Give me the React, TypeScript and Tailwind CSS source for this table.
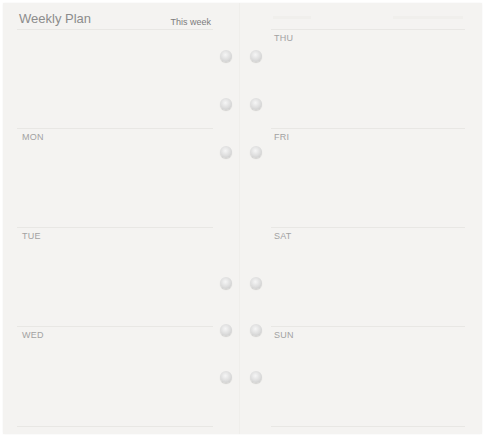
import React from "react";

const font = "font-['Liberation_Sans',Arial,sans-serif]";

function Hole() {
  return (
    <div className="w-[12px] h-[12px] rounded-full bg-[radial-gradient(circle_at_45%_40%,#f6f6f6_0%,#dcdcdc_55%,#c0c0c0_100%)] shadow-[0_1px_1px_rgba(0,0,0,0.14)]" />
  );
}

function Holes() {
  return (
    <div className="flex flex-col w-[12px] pt-[47px]">
      <div className="flex flex-col gap-[36px]">
        <Hole />
        <Hole />
        <Hole />
      </div>
      <div className="flex flex-col gap-[35px] mt-[119px]">
        <Hole />
        <Hole />
        <Hole />
      </div>
    </div>
  );
}

function Day({ label, last, right }: { label: string; last?: boolean; right?: boolean }) {
  return (
    <div
      className={
        "border-t border-[#e8e7e4] pt-[4px] " +
        (right ? "pl-[3px] " : "pl-[5px] ") +
        (last ? "h-[101px] border-b" : "h-[99px]")
      }
    >
      <div className="text-[9px] leading-none text-[#a2a2a2] tracking-[0.2px]">{label}</div>
    </div>
  );
}

export default function App() {
  return (
    <div className={"w-[485px] h-[439px] bg-white pt-[3px] pl-[3px] " + font}>
      <div className="flex h-[431px] w-[479px] shadow-[0_0_2px_rgba(0,0,0,0.05)]">
        {/* left page */}
        <div className="flex w-[237px] h-full bg-[#f4f3f1] pl-[14px] border-r border-[#efeeeb]">
          <div className="w-[196px] flex flex-col">
            <div className="h-[27px] border-b border-[#e8e7e4] flex items-start justify-between pt-[9px] pl-[2px]">
              <span className="text-[13px] leading-none text-[#8c8c8c]">Weekly Plan</span>
              <span className="text-[9px] leading-none text-[#7c7c7c] mt-[6px] mr-[2px]">This week</span>
            </div>
            <div className="h-[98px]" />
            <Day label="MON" />
            <Day label="TUE" />
            <Day label="WED" last />
          </div>
          <div className="ml-[7px]">
            <Holes />
          </div>
        </div>
        {/* right page */}
        <div className="flex w-[242px] h-full bg-[#f4f3f1] pl-[10px]">
          <Holes />
          <div className="ml-[9px] w-[194px] flex flex-col">
            <div className="h-[26px] flex items-start justify-between pt-[13px] px-[2px]">
              <div className="w-[38px] h-[3px] bg-[#f0efec]" />
              <div className="w-[70px] h-[3px] bg-[#f0efec]" />
            </div>
            <Day label="THU" right />
            <Day label="FRI" right />
            <Day label="SAT" right />
            <Day label="SUN" right last />
          </div>
        </div>
      </div>
    </div>
  );
}
